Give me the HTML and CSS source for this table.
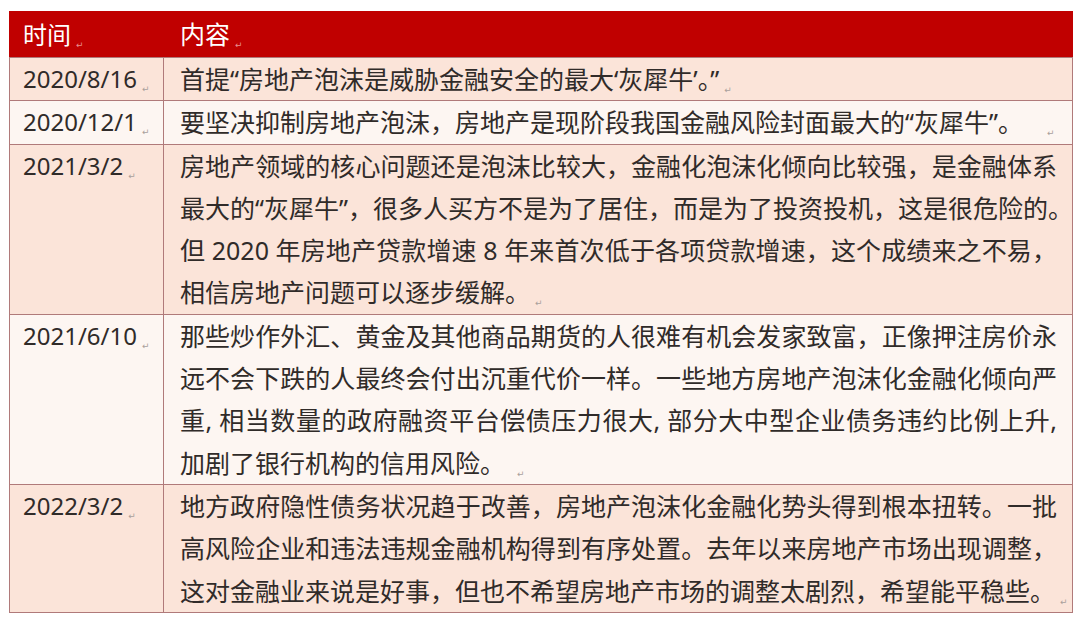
FILE: index.html
```html
<!DOCTYPE html>
<html lang="zh-CN">
<head>
<meta charset="utf-8">
<title>房地产泡沫 表</title>
<link rel="stylesheet" href="styles.css">
</head>
<body>
<table class="tbl">
  <colgroup>
    <col class="col-date">
    <col class="col-text">
  </colgroup>
  <thead>
    <tr class="head">
      <th class="c-date">时间<span class="rm">↵</span></th>
      <th class="c-text">内容<span class="rm">↵</span></th>
    </tr>
  </thead>
  <tbody>
    <tr class="odd">
      <td class="c-date">2020/8/16<span class="rm">↵</span></td>
      <td class="c-text">首提“房地产泡沫是威胁金融安全的最大‘灰犀牛’。”<span class="rm">↵</span></td>
    </tr>
    <tr class="even">
      <td class="c-date">2020/12/1<span class="rm">↵</span></td>
      <td class="c-text">要坚决抑制房地产泡沫，房地产是现阶段我国金融风险封面最大的“灰犀牛”。<span class="rm gap">↵</span></td>
    </tr>
    <tr class="odd">
      <td class="c-date">2021/3/2<span class="rm">↵</span></td>
      <td class="c-text"><span class="ln">房地产领域的核心问题还是泡沫比较大，金融化泡沫化倾向比较强，是金融体系</span><span class="ln">最大的“灰犀牛”，很多人买方不是为了居住，而是为了投资投机，这是很危险的。</span><span class="ln">但 2020 年房地产贷款增速 8 年来首次低于各项贷款增速，这个成绩来之不易，</span>相信房地产问题可以逐步缓解。<span class="rm">↵</span></td>
    </tr>
    <tr class="even">
      <td class="c-date">2021/6/10<span class="rm">↵</span></td>
      <td class="c-text"><span class="ln">那些炒作外汇、黄金及其他商品期货的人很难有机会发家致富，正像押注房价永</span><span class="ln">远不会下跌的人最终会付出沉重代价一样。一些地方房地产泡沫化金融化倾向严</span><span class="ln">重, 相当数量的政府融资平台偿债压力很大, 部分大中型企业债务违约比例上升,</span>加剧了银行机构的信用风险。<span class="rm gap-s">↵</span></td>
    </tr>
    <tr class="odd">
      <td class="c-date">2022/3/2<span class="rm">↵</span></td>
      <td class="c-text"><span class="ln">地方政府隐性债务状况趋于改善，房地产泡沫化金融化势头得到根本扭转。一批</span><span class="ln">高风险企业和违法违规金融机构得到有序处置。去年以来房地产市场出现调整，</span>这对金融业来说是好事，但也不希望房地产市场的调整太剧烈，希望能平稳些。<span class="rm">↵</span></td>
    </tr>
  </tbody>
</table>
</body>
</html>
```

FILE: styles.css
```css
html, body {
  margin: 0;
  padding: 0;
  background: #ffffff;
}

body {
  padding: 11px 0 0 9px;
  font-family: "Noto Sans", "Noto Sans CJK SC", sans-serif;
  color: #302b29;
}

.tbl {
  width: 1064px;
  border-collapse: collapse;
  table-layout: fixed;
  border: 1px solid #b07a7a;
}

.col-date {
  width: 154px;
}

.tbl th,
.tbl td {
  border: 1px solid #b07a7a;
  text-align: left;
  vertical-align: top;
  padding: 0;
  white-space: nowrap;
}

.tbl .c-date {
  padding-left: 13px;
  font-size: 24px;
  line-height: 42.3px;
}

.tbl .c-text {
  padding-left: 16px;
  padding-right: 15px;
  font-size: 25px;
  line-height: 42.3px;
}

.ln {
  display: block;
  text-align: justify;
  text-align-last: justify;
}

.head th {
  background: #c00000;
  color: #ffffff;
  font-weight: normal;
  font-size: 26px;
  border-color: #c00000;
  border-bottom-color: #b07a7a;
}

.tbl .head th {
  line-height: 45px;
}

.odd td {
  background: #fbe4d9;
}

.even td {
  background: #fdf6f2;
}

.rm {
  font-family: "DejaVu Sans", sans-serif;
  font-size: 9px;
  line-height: 0;
  color: #a9a09c;
  margin-left: 5px;
  vertical-align: -4px;
}

.head .rm {
  color: #e88f8f;
}

.rm.gap {
  margin-left: 24px;
}

.rm.gap-s {
  margin-left: 12px;
}
```
